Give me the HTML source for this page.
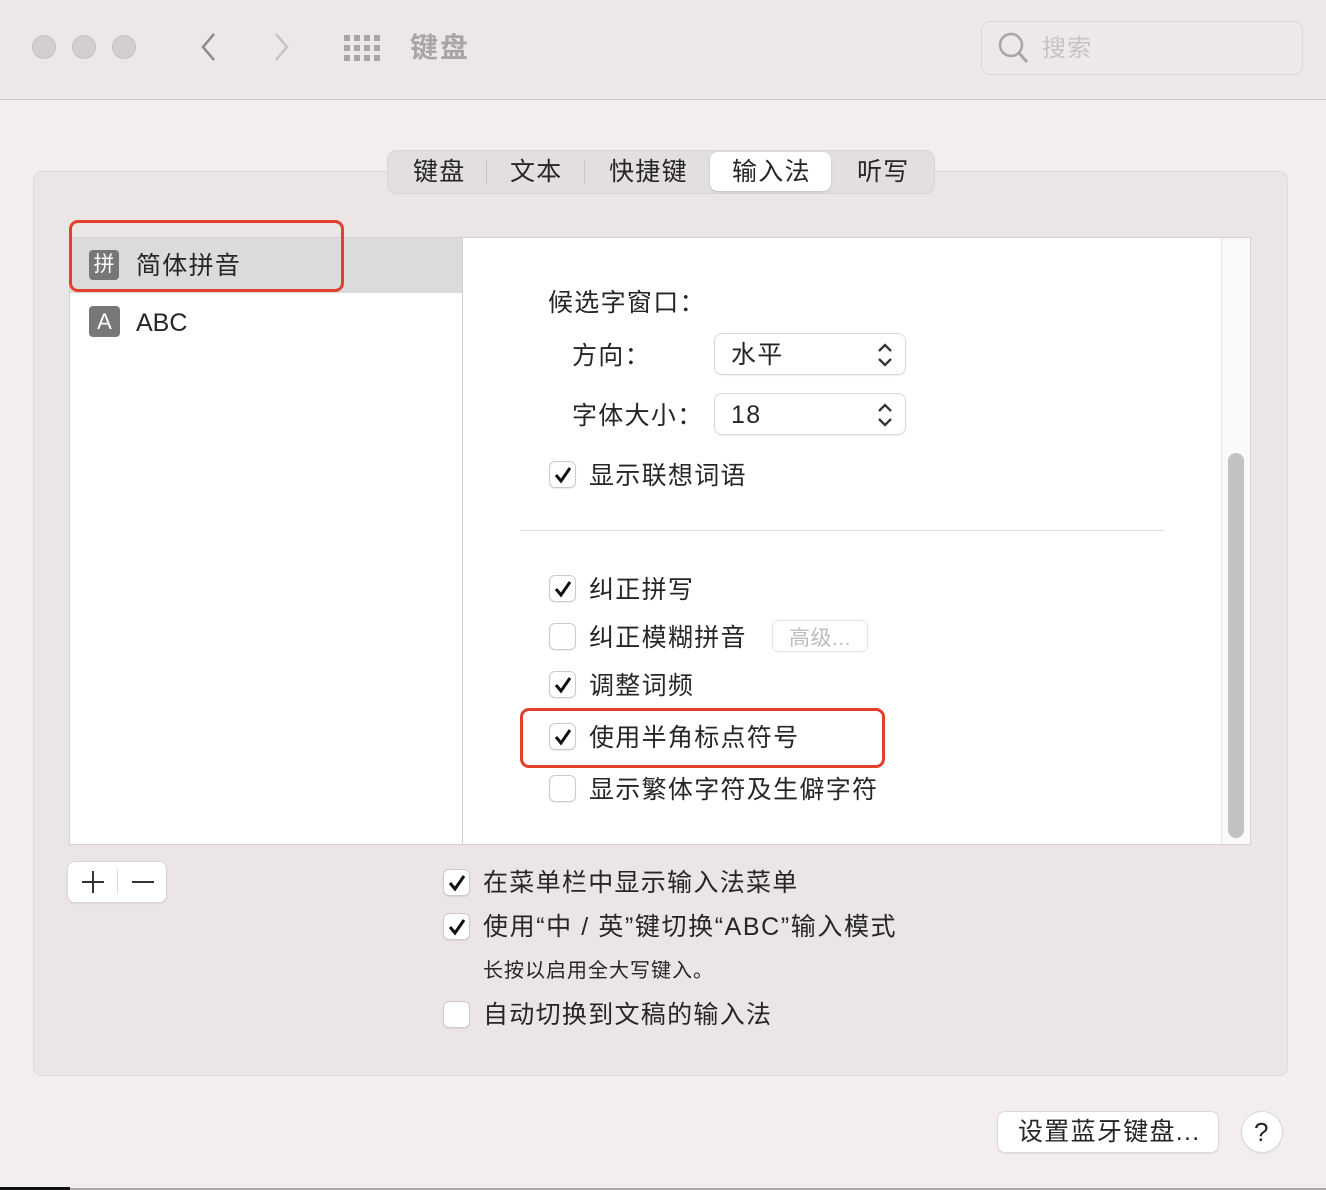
<!DOCTYPE html>
<html><head><meta charset="utf-8"><style>
*{margin:0;padding:0;box-sizing:border-box}
body{width:1326px;height:1190px;background:#f3eded;position:relative;overflow:hidden;font-family:"Liberation Sans","Noto Sans CJK SC",sans-serif;color:#222}
.a{position:absolute}
.t{position:absolute;font-size:25px;line-height:30px;white-space:nowrap;color:#262626;letter-spacing:1.3px;margin-top:1px}
.cb{position:absolute;width:27px;height:27px;border:1px solid #cfcaca;border-radius:6px;background:#fff;box-shadow:0 1px 1px rgba(0,0,0,.08)}
.cb svg{position:absolute;left:3px;top:3px}
.dot{position:absolute;width:24px;height:24px;border-radius:50%;background:#d4cfcf;border:1px solid #c6c1c1;top:35px}
.pop{position:absolute;background:#fff;border-radius:7px;box-shadow:0 0 0 1px #dcd7d7,0 1px 2px rgba(0,0,0,.15)}
.red{position:absolute;border:3.5px solid #e23f2c;border-radius:9px}
</style></head><body>
<div class="a" style="left:0;top:0;width:1326px;height:100px;background:#ede7e7;border-bottom:1px solid #cdc8c8"></div>
<div class="dot" style="left:32px"></div><div class="dot" style="left:72px"></div><div class="dot" style="left:112px"></div>
<svg class="a" style="left:196px;top:31px" width="24" height="32"><path d="M18 3 L7 16 L18 29" fill="none" stroke="#8c8888" stroke-width="2.5"/></svg>
<svg class="a" style="left:270px;top:31px" width="24" height="32"><path d="M6 3 L17 16 L6 29" fill="none" stroke="#c8c3c3" stroke-width="2.5"/></svg>
<svg class="a" style="left:343px;top:34px" width="40" height="28" fill="#aaa5a5">
<rect x="1" y="1" width="6" height="6"/><rect x="11" y="1" width="6" height="6"/><rect x="21" y="1" width="6" height="6"/><rect x="31" y="1" width="6" height="6"/>
<rect x="1" y="11" width="6" height="6"/><rect x="11" y="11" width="6" height="6"/><rect x="21" y="11" width="6" height="6"/><rect x="31" y="11" width="6" height="6"/>
<rect x="1" y="21" width="6" height="6"/><rect x="11" y="21" width="6" height="6"/><rect x="21" y="21" width="6" height="6"/><rect x="31" y="21" width="6" height="6"/></svg>
<div class="t" style="left:410px;top:30px;font-size:28px;font-weight:bold;color:#aaa5a5;line-height:34px;letter-spacing:2px">键盘</div>
<div class="a" style="left:981px;top:21px;width:322px;height:54px;border:1.5px solid #dcd6d6;border-radius:9px;background:#eee8e8"></div>
<svg class="a" style="left:996px;top:30px" width="36" height="36"><circle cx="15" cy="15" r="11" fill="none" stroke="#aaa5a5" stroke-width="2.5"/><path d="M23 23 L31 32" stroke="#aaa5a5" stroke-width="3"/></svg>
<div class="t" style="left:1042px;top:33px;font-size:24px;color:#c8c3c3">搜索</div>

<div class="a" style="left:33px;top:171px;width:1255px;height:905px;background:#ebe5e5;border:1px solid #dfd9d9;border-radius:9px"></div>
<div class="a" style="left:387px;top:150px;width:548px;height:44px;background:#e4dfdf;border:1px solid #d9d3d3;border-radius:10px"></div>
<div class="a" style="left:710px;top:152px;width:121px;height:39px;background:#fff;border-radius:8px;box-shadow:0 1px 2px rgba(0,0,0,.15)"></div>
<div class="a" style="left:486px;top:160px;width:1px;height:24px;background:#cbc6c6"></div>
<div class="a" style="left:584px;top:160px;width:1px;height:24px;background:#cbc6c6"></div>
<div class="t" style="left:413px;top:156px">键盘</div>
<div class="t" style="left:510px;top:156px">文本</div>
<div class="t" style="left:609px;top:156px">快捷键</div>
<div class="t" style="left:732px;top:156px">输入法</div>
<div class="t" style="left:857px;top:156px">听写</div>

<div class="a" style="left:69px;top:237px;width:1182px;height:608px;background:#fff;border:1px solid #d5d0d0"></div>
<div class="a" style="left:462px;top:237px;width:1px;height:608px;background:#d5d0d0"></div>
<div class="a" style="left:70px;top:238px;width:392px;height:55px;background:#dcdbdb"></div>
<div class="a" style="left:89px;top:250px;width:30px;height:30px;background:#777;border-radius:4px;color:#fff;font-size:21px;line-height:30px;text-align:center">拼</div>
<div class="t" style="left:136px;top:250px">简体拼音</div>
<div class="a" style="left:89px;top:306px;width:31px;height:31px;background:#787878;border-radius:4px;color:#fff;font-size:22px;line-height:31px;text-align:center">A</div>
<div class="t" style="left:136px;top:307px;letter-spacing:0">ABC</div>
<div class="red" style="left:69px;top:220px;width:275px;height:72px"></div>

<div class="a" style="left:1221px;top:238px;width:29px;height:606px;background:#f9f9f9;border-left:1px solid #e6e6e6"></div>
<div class="a" style="left:1228px;top:453px;width:16px;height:385px;background:#c2c2c2;border-radius:8px"></div>

<div class="t" style="left:548px;top:287px">候选字窗口：</div>
<div class="t" style="left:572px;top:340px">方向：</div>
<div class="t" style="left:572px;top:400px">字体大小：</div>
<div class="pop" style="left:715px;top:334px;width:190px;height:40px"></div>
<div class="pop" style="left:715px;top:394px;width:190px;height:40px"></div>
<div class="t" style="left:731px;top:339px">水平</div>
<div class="t" style="left:731px;top:399px">18</div>
<svg class="a" style="left:876px;top:342px" width="18" height="26"><path d="M3 9 L9 3 L15 9 M3 17 L9 23 L15 17" fill="none" stroke="#333" stroke-width="2.3"/></svg>
<svg class="a" style="left:876px;top:402px" width="18" height="26"><path d="M3 9 L9 3 L15 9 M3 17 L9 23 L15 17" fill="none" stroke="#333" stroke-width="2.3"/></svg>

<div class="cb" style="left:549px;top:461px"><svg width="20" height="20"><path d="M3 10 L8 16 L17 3" fill="none" stroke="#111" stroke-width="3"/></svg></div>
<div class="t" style="left:589px;top:460px">显示联想词语</div>
<div class="a" style="left:520px;top:530px;width:644px;height:1px;background:#dedede"></div>
<div class="cb" style="left:549px;top:575px"><svg width="20" height="20"><path d="M3 10 L8 16 L17 3" fill="none" stroke="#111" stroke-width="3"/></svg></div>
<div class="t" style="left:589px;top:574px">纠正拼写</div>
<div class="cb" style="left:549px;top:623px"></div>
<div class="t" style="left:589px;top:622px">纠正模糊拼音</div>
<div class="a" style="left:772px;top:620px;width:96px;height:32px;border:1px solid #e6e2e2;border-radius:6px;background:#fff"></div>
<div class="t" style="left:789px;top:623px;font-size:21px;color:#bdbdbd;letter-spacing:0.5px">高级...</div>
<div class="cb" style="left:549px;top:671px"><svg width="20" height="20"><path d="M3 10 L8 16 L17 3" fill="none" stroke="#111" stroke-width="3"/></svg></div>
<div class="t" style="left:589px;top:670px">调整词频</div>
<div class="cb" style="left:549px;top:723px"><svg width="20" height="20"><path d="M3 10 L8 16 L17 3" fill="none" stroke="#111" stroke-width="3"/></svg></div>
<div class="t" style="left:589px;top:722px">使用半角标点符号</div>
<div class="cb" style="left:549px;top:775px"></div>
<div class="t" style="left:589px;top:774px">显示繁体字符及生僻字符</div>
<div class="red" style="left:520px;top:708px;width:365px;height:60px"></div>

<div class="pop" style="left:68px;top:862px;width:98px;height:40px"></div>
<svg class="a" style="left:80px;top:870px" width="26" height="24"><path d="M2 12 H24 M13 1 V23" stroke="#333" stroke-width="2"/></svg>
<div class="a" style="left:117px;top:870px;width:1px;height:24px;background:#ddd"></div>
<svg class="a" style="left:130px;top:870px" width="26" height="24"><path d="M2 12 H24" stroke="#333" stroke-width="2"/></svg>

<div class="cb" style="left:443px;top:869px"><svg width="20" height="20"><path d="M3 10 L8 16 L17 3" fill="none" stroke="#111" stroke-width="3"/></svg></div>
<div class="t" style="left:483px;top:867px">在菜单栏中显示输入法菜单</div>
<div class="cb" style="left:443px;top:913px"><svg width="20" height="20"><path d="M3 10 L8 16 L17 3" fill="none" stroke="#111" stroke-width="3"/></svg></div>
<div class="t" style="left:483px;top:911px;letter-spacing:1.6px">使用“中 / 英”键切换“ABC”输入模式</div>
<div class="t" style="left:483px;top:955px;font-size:20px;letter-spacing:1px">长按以启用全大写键入。</div>
<div class="cb" style="left:443px;top:1001px"></div>
<div class="t" style="left:483px;top:999px">自动切换到文稿的输入法</div>

<div class="pop" style="left:998px;top:1112px;width:220px;height:40px"></div>
<div class="t" style="left:1018px;top:1116px">设置蓝牙键盘...</div>
<div class="pop" style="left:1242px;top:1112px;width:40px;height:40px;border-radius:50%"></div>
<div class="t" style="left:1254px;top:1116px;font-size:26px">?</div>
<div class="a" style="left:0;top:1188px;width:1326px;height:2px;background:#aaa"></div>
<div class="a" style="left:0;top:1187px;width:70px;height:3px;background:#111"></div>
</body></html>
